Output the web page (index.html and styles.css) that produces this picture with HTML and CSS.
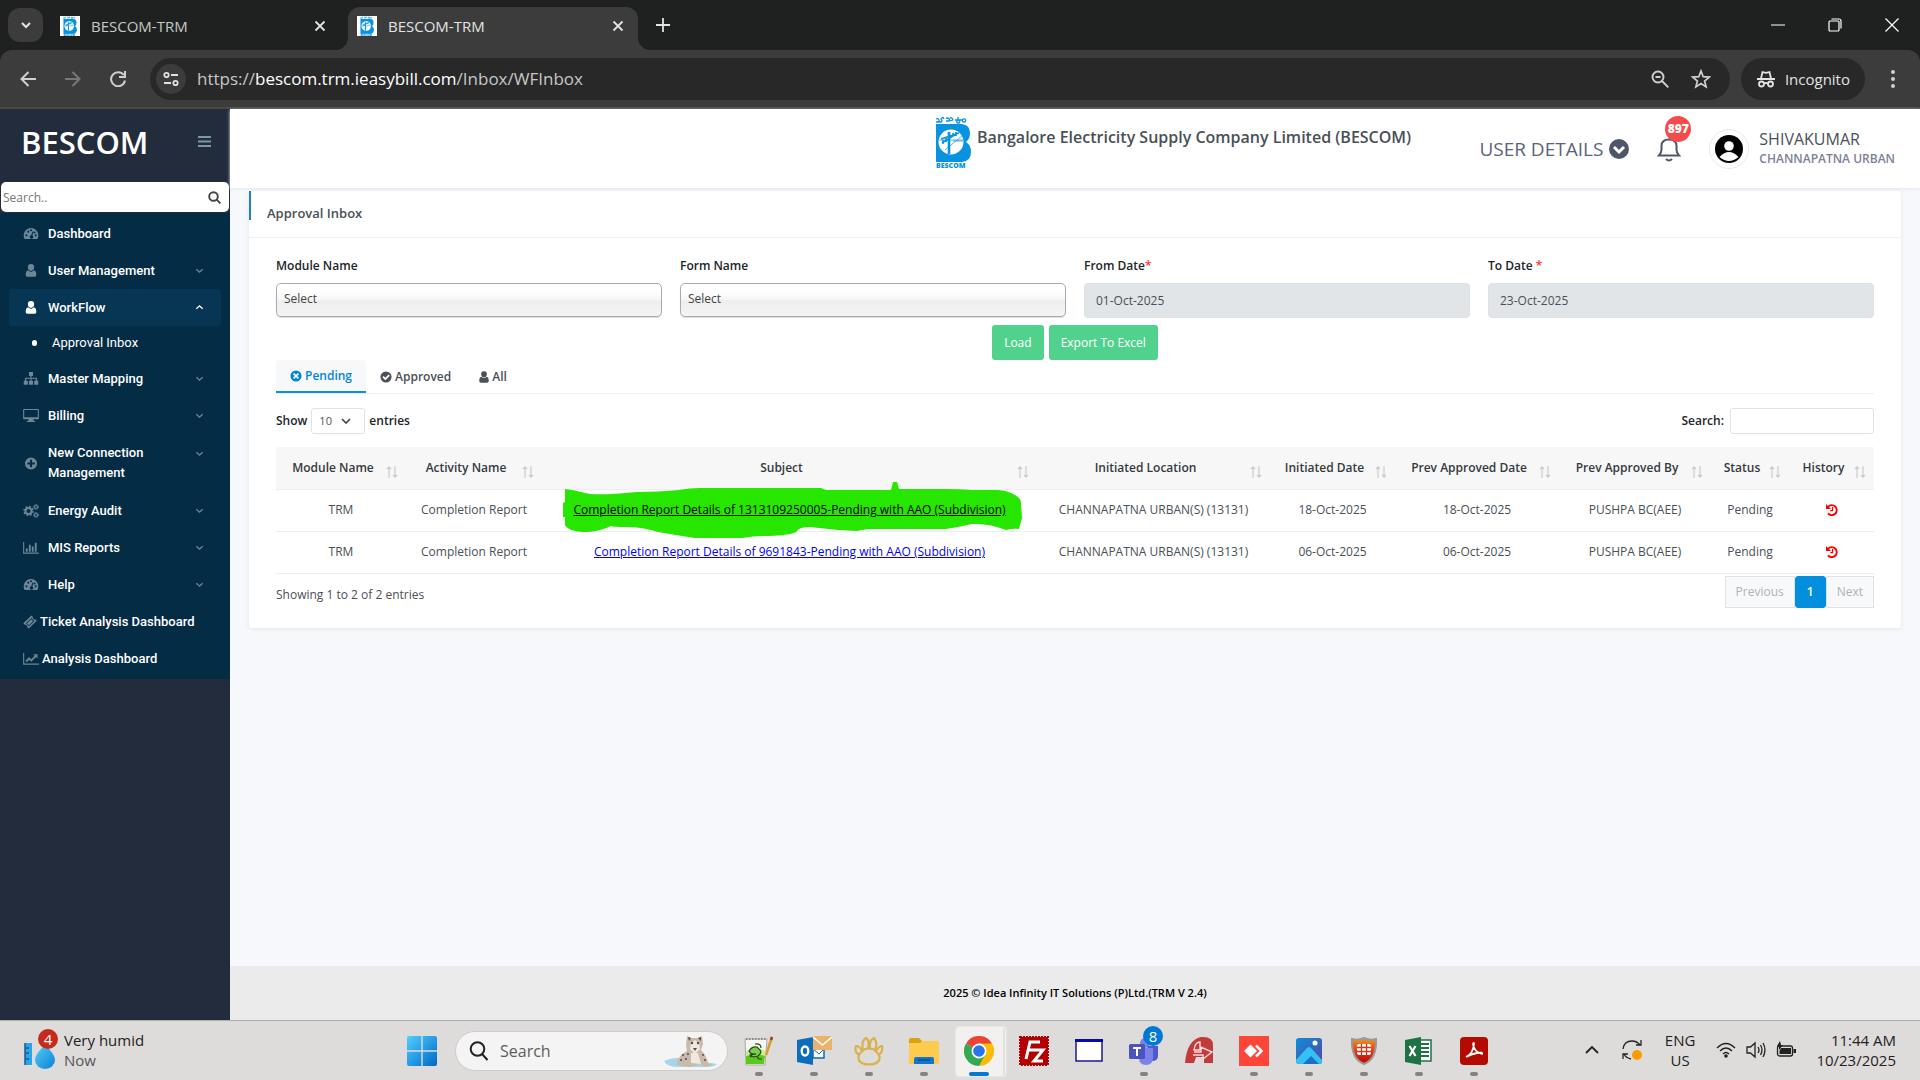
FILE: index.html
```html
<!DOCTYPE html>
<html lang="en">
<head>
<meta charset="utf-8">
<meta name="viewport" content="width=device-width, initial-scale=1">
<title>BESCOM-TRM</title>
<link rel="stylesheet" href="styles.css">
</head>
<body>
<svg class="defs" aria-hidden="true">
  <symbol id="logo" viewBox="0 0 36 52">
    <g fill="none" stroke="#0793e0" stroke-width="1.3"><path d="M1 3q2-1 3 1t-3 2h5q2-1 0-3 2-3 3 0"/><path d="M11 2q5 0 3 3h-3q5 0 7-1-1-3-3-2"/><path d="M20 4h7M23 1v3q-3 3 1 3 2-2-1-3"/><circle cx="29" cy="4.500" r="1.700"/></g>
    <path fill="#0793e0" d="M1 8h26q8 1 8 9 0 6-4 9 5 3 5 10 0 9-9 10H1z"/>
    <circle cx="16" cy="26" r="12.500" fill="#fff"/>
    <g stroke="#0793e0" fill="none"><path stroke-width="2.600" d="M14 16v22"/><path stroke-width="1.600" d="M7 27l14-9M6 23l18-6M8 24v4M11 22v4M18 17v4M21 16v4"/><path stroke-width=".7" d="M4 24h24M10 34l17-14M18 25h10"/></g>
    <text x="1" y="52" font-family="Open Sans, sans-serif" font-size="7" font-weight="800" fill="#0793e0">BESCOM</text>
  </symbol>
  <symbol id="gauge" viewBox="0 0 16 14"><path fill="currentColor" fill-rule="evenodd" d="M8 1a8 8 0 0 0-6.800 12h13.600A8 8 0 0 0 8 1zM2 9a1.100 1.100 0 1 1 2.200 0A1.100 1.100 0 0 1 2 9zm2-4a1.100 1.100 0 1 1 2.200 0A1.100 1.100 0 0 1 4 5zm2.900-1.500a1.100 1.100 0 1 1 2.200 0 1.100 1.100 0 0 1-2.200 0zM10.500 5l-1 4.200a1.800 1.800 0 1 1-1.200-.3L9.500 4.800zM10.700 6a1.100 1.100 0 1 1 2.200 0 1.100 1.100 0 0 1-2.200 0zM12 9a1.100 1.100 0 1 1 2.200 0A1.100 1.100 0 0 1 12 9z"/></symbol>
  <symbol id="user" viewBox="0 0 12 14"><path fill="currentColor" d="M6 0a3.400 3.400 0 0 1 3.400 3.600C9.400 5.700 8 7.500 6 7.500S2.600 5.700 2.600 3.600A3.400 3.400 0 0 1 6 0zM3 6.700c.8 1 1.800 1.600 3 1.600s2.200-.6 3-1.600c2 .3 2.700 2.500 2.700 4.800 0 1.500-.8 2.300-2 2.300H2.300c-1.200 0-2-.8-2-2.300C.3 9.200 1 7 3 6.700z"/></symbol>
  <symbol id="sitemap" viewBox="0 0 16 14"><path fill="currentColor" d="M5.800 0h4.400v4.200H8.600v1.900h5.900v3.300h1.300v4.300h-4.400V9.400h1.700V7.300H8.600v2.100h1.600v4.300H5.800V9.400h1.600V7.300H2.900v2.100h1.700v4.300H.2V9.400h1.300V6.100h5.900V4.200H5.800z"/></symbol>
  <symbol id="screen" viewBox="0 0 17 14"><path fill="currentColor" fill-rule="evenodd" d="M1 0h15q1 0 1 1v9q0 1-1 1h-5l.5 2H13v1H4v-1h1.500L6 11H1q-1 0-1-1V1q0-1 1-1zm.2 1.200v7.600h14.600V1.200z"/></symbol>
  <symbol id="plusc" viewBox="0 0 14 14"><path fill="currentColor" fill-rule="evenodd" d="M7 .5a6.500 6.500 0 1 1 0 13 6.500 6.500 0 0 1 0-13zM5.900 3v2.900H3v2.200h2.900V11h2.200V8.100H11V5.900H8.100V3z"/></symbol>
  <symbol id="cogs" viewBox="0 0 16 14"><g fill="none" stroke="currentColor"><circle cx="5.500" cy="7" r="3" stroke-width="2"/><circle cx="5.500" cy="7" r="4.500" stroke-width="1.500" stroke-dasharray="1.800 1.730"/><circle cx="13" cy="3" r="1.500" stroke-width="1.200"/><circle cx="13" cy="3" r="2.500" stroke-width="1" stroke-dasharray="1.100 .86"/><circle cx="13" cy="11" r="1.500" stroke-width="1.200"/><circle cx="13" cy="11" r="2.500" stroke-width="1" stroke-dasharray="1.100 .86"/></g></symbol>
  <symbol id="bars" viewBox="0 0 17 14"><path fill="currentColor" d="M0 1h1.200v11.500H17v1.200H0zM3 8h2v3.500H3zM6.200 4h2v7.500h-2zM9.400 6h2v5.500h-2zM12.600 2h2v9.500h-2z"/></symbol>
  <symbol id="ticket" viewBox="0 0 14 14"><path fill="currentColor" fill-rule="evenodd" d="M8.500.5l1.400 1.400q-.2 1.300.6 2 .8.700 2 .5L13.800 5.800 5.700 13.600 4.300 12.200q.2-1.300-.6-2-.8-.7-2-.5L.3 8.300zM8.300 3L2.900 8.300 6 11.300 11.400 6zM8.200 4.200l2 1.900-4.200 4.100-2-1.900z"/></symbol>
  <symbol id="trend" viewBox="0 0 17 14"><path fill="currentColor" d="M0 1h1.200v11.500H17v1.200H0zM2.500 9.500l4-4 2.300 2.200L12.500 4 11 2.500h4.500V7L14 5.500 8.800 10.600 6.500 8.400l-2.500 2.600z"/></symbol>
  <symbol id="down" viewBox="0 0 10 10"><path fill="none" stroke="currentColor" stroke-width="1.500" d="M1.500 3.500L5 6.800l3.500-3.300"/></symbol>
  <symbol id="xc" viewBox="0 0 14 14"><path fill="currentColor" fill-rule="evenodd" d="M7 .5a6.500 6.500 0 1 1 0 13 6.500 6.500 0 0 1 0-13zM4.900 3.500L3.500 4.900 5.600 7 3.500 9.100l1.400 1.400L7 8.400l2.100 2.100 1.400-1.400L8.400 7l2.100-2.100-1.400-1.400L7 5.600z"/></symbol>
  <symbol id="okc" viewBox="0 0 14 14"><path fill="currentColor" fill-rule="evenodd" d="M7 .5a6.500 6.500 0 1 1 0 13 6.500 6.500 0 0 1 0-13zM10 4L6.200 7.800 4.300 5.900 2.800 7.400l3.400 3.400 5.300-5.300z"/></symbol>
  <symbol id="sort" viewBox="0 0 12 12"><path fill="none" stroke="#c9cbce" stroke-width="1.200" d="M3 12V1M1 3.200L3 .8l2 2.400M9 0v11M7 8.800l2 2.400 2-2.400"/></symbol>
  <symbol id="history" viewBox="0 0 12 12"><path fill="none" stroke="red" stroke-width="1.900" d="M2 2.800A5 5 0 1 1 2 9.500"/><path fill="red" d="M0 0v5h5z"/><path fill="none" stroke="red" stroke-width="1.200" d="M6.600 3v3.600H4.300"/></symbol>
  <symbol id="close" viewBox="0 0 12 12"><path fill="none" stroke="currentColor" stroke-width="1.800" d="M1.500 1.500l9 9M10.500 1.500l-9 9"/></symbol>
</svg>

<header class="browser">
  <div class="tabstrip">
    <button class="tabsearch" aria-label="Search tabs"><svg width="14" height="14" viewBox="0 0 14 14"><path d="M3 5l4 4 4-4" fill="none" stroke="#e3e3e3" stroke-width="2"/></svg></button>
    <div class="tab"><span class="favicon"><svg width="20" height="20"><use href="#logo"/></svg></span><span class="tabname">BESCOM-TRM</span><button class="plain" aria-label="Close tab"><svg width="12" height="12"><use href="#close"/></svg></button></div>
    <div class="tab active"><span class="favicon"><svg width="20" height="20"><use href="#logo"/></svg></span><span class="tabname">BESCOM-TRM</span><button class="plain" aria-label="Close tab"><svg width="12" height="12"><use href="#close"/></svg></button></div>
    <button class="plain newtab" aria-label="New tab"><svg width="14" height="14" viewBox="0 0 14 14"><path d="M7 0v14M0 7h14" stroke="#e3e3e3" stroke-width="1.800"/></svg></button>
    <div class="winbtns">
      <button class="plain" aria-label="Minimize"><svg width="14" height="14" viewBox="0 0 14 14"><path d="M0 7h14" stroke="#fff"/></svg></button>
      <button class="plain" aria-label="Restore"><svg width="14" height="14" viewBox="0 0 14 14"><g fill="none" stroke="#fff" stroke-width="1.200"><rect x="1" y="3" width="10" height="10" rx="1"/><path d="M3.500 1H11q2 0 2 2v7.500"/></g></svg></button>
      <button class="plain" aria-label="Close"><svg width="14" height="14" viewBox="0 0 14 14"><path d="M.5.5l13 13M13.500.5l-13 13" stroke="#fff" stroke-width="1.200"/></svg></button>
    </div>
  </div>
  <div class="toolbar">
    <nav class="navbtns">
      <button class="plain" aria-label="Back"><svg width="16" height="16" viewBox="0 0 16 16"><path d="M16 8H2M8.500 1L1.500 8l7 7" fill="none" stroke="#d0d0d0" stroke-width="2"/></svg></button>
      <button class="plain" aria-label="Forward"><svg width="16" height="16" viewBox="0 0 16 16"><path d="M0 8h14M7.500 1l7 7-7 7" fill="none" stroke="#777" stroke-width="2"/></svg></button>
      <button class="plain" aria-label="Reload"><svg width="16" height="16" viewBox="0 0 16 16"><path d="M13.700 4A7 7 0 1 0 15 9.500M15 0v6H9" fill="none" stroke="#d0d0d0" stroke-width="2"/></svg></button>
    </nav>
    <div class="omnibox">
      <button class="siteinfo" aria-label="Site information"><svg width="16" height="16" viewBox="0 0 16 16"><g fill="none" stroke="#e0e0e0" stroke-width="1.800"><circle cx="3.500" cy="4" r="2.200"/><path d="M8 4h7M1 12h7"/><circle cx="12.500" cy="12" r="2.200"/></g></svg></button>
      <span class="url">https://<b>bescom.trm.ieasybill.com</b>/Inbox/WFInbox</span>
      <button class="plain" aria-label="Zoom"><svg width="18" height="18" viewBox="0 0 18 18"><g fill="none" stroke="#d0d0d0" stroke-width="1.900"><circle cx="7" cy="7" r="5.500"/><path d="M11 11l6.300 6.300M4.500 7h5"/></g></svg></button>
      <button class="plain" aria-label="Bookmark"><svg width="20" height="20" viewBox="0 0 20 20"><path d="M10 2l2.200 5.700 6.100.4-4.700 3.900 1.500 5.900L10 14.600l-5.100 3.300L6.400 12 1.700 8.100l6.100-.4z" fill="none" stroke="#d0d0d0" stroke-width="1.700"/></svg></button>
    </div>
    <button class="incognito"><svg width="18" height="18" viewBox="0 0 18 18"><g fill="none" stroke="#e3e3e3" stroke-width="1.800"><path d="M0 9h18M4 8.500L5.500 2l3.500.8 3.500-.8L14 8.500"/><circle cx="4.500" cy="14" r="2.500"/><circle cx="13.500" cy="14" r="2.500"/><path d="M7 13.500q2-1 4 0"/></g></svg>Incognito</button>
    <button class="plain" aria-label="Menu"><svg width="18" height="18" viewBox="0 0 18 18"><g fill="#d0d0d0"><circle cx="9" cy="2" r="2"/><circle cx="9" cy="9" r="2"/><circle cx="9" cy="16" r="2"/></g></svg></button>
  </div>
</header>

<div class="app">
  <aside class="sidebar">
    <div class="brand"><span>BESCOM</span><button class="plain" aria-label="Toggle menu"><svg width="13" height="11" viewBox="0 0 13 11"><path d="M0 1h13M0 5.500h13M0 10h13" stroke="#7b98a8" stroke-width="1.800"/></svg></button></div>
    <label class="menusearch"><input type="text" placeholder="Search.." aria-label="Search menu"><svg width="13" height="13" viewBox="0 0 13 13"><g fill="none" stroke="#444" stroke-width="1.900"><circle cx="5.500" cy="5.500" r="4.300"/><path d="M8.700 8.700l3.700 3.700"/></g></svg></label>
    <ul class="menu">
      <li><a href="#"><svg class="mi" width="15" height="13"><use href="#gauge"/></svg><span>Dashboard</span></a></li>
      <li><a href="#"><svg class="mi" width="11" height="13"><use href="#user"/></svg><span>User Management</span><svg class="chev" width="9" height="9"><use href="#down"/></svg></a></li>
      <li><a href="#" class="open"><svg class="mi" width="11" height="13"><use href="#user"/></svg><span>WorkFlow</span><svg class="chev up" width="9" height="9"><use href="#down"/></svg></a>
        <a href="#" class="sub">Approval Inbox</a></li>
      <li><a href="#"><svg class="mi" width="15" height="13"><use href="#sitemap"/></svg><span>Master Mapping</span><svg class="chev" width="9" height="9"><use href="#down"/></svg></a></li>
      <li><a href="#"><svg class="mi" width="16" height="13"><use href="#screen"/></svg><span>Billing</span><svg class="chev" width="9" height="9"><use href="#down"/></svg></a></li>
      <li><a href="#" class="tall"><svg class="mi" width="13" height="13"><use href="#plusc"/></svg><span>New Connection Management</span><svg class="chev first" width="9" height="9"><use href="#down"/></svg></a></li>
      <li><a href="#"><svg class="mi" width="16" height="14"><use href="#cogs"/></svg><span>Energy Audit</span><svg class="chev" width="9" height="9"><use href="#down"/></svg></a></li>
      <li><a href="#"><svg class="mi" width="16" height="13"><use href="#bars"/></svg><span>MIS Reports</span><svg class="chev" width="9" height="9"><use href="#down"/></svg></a></li>
      <li><a href="#"><svg class="mi" width="15" height="13"><use href="#gauge"/></svg><span>Help</span><svg class="chev" width="9" height="9"><use href="#down"/></svg></a></li>
      <li><a href="#" class="tight"><svg width="14" height="14"><use href="#ticket"/></svg><span>Ticket Analysis Dashboard</span></a></li>
      <li><a href="#" class="tight"><svg width="16" height="13"><use href="#trend"/></svg><span>Analysis Dashboard</span></a></li>
    </ul>
  </aside>

  <div class="page">
    <header class="topbar">
      <div class="company"><svg width="36" height="52"><use href="#logo"/></svg><h1>Bangalore Electricity Supply Company Limited (BESCOM)</h1></div>
      <button class="details">USER DETAILS<svg width="20" height="20" viewBox="0 0 20 20"><circle cx="10" cy="10" r="10" fill="#50566a"/><path d="M5 8l5 5 5-5" fill="none" stroke="#fff" stroke-width="3"/></svg></button>
      <button class="bell" aria-label="Notifications"><svg width="24" height="26" viewBox="0 0 24 26"><path d="M2 19.500h20q-2.500-2.500-2.500-6V10q0-6.500-7.500-6.500T4.500 10v3.500q0 3.500-2.500 6z" fill="none" stroke="#50566a" stroke-width="2"/><path d="M9 23q3 3 6 0" fill="none" stroke="#50566a" stroke-width="2"/></svg><span class="count">897</span></button>
      <div class="profile">
        <span class="avatar"><svg width="28" height="28" viewBox="0 0 28 28"><circle cx="14" cy="14" r="14" fill="#000"/><circle cx="14" cy="11" r="4.800" fill="#fff"/><path d="M4.500 22q9.500-10 19 0-9.500 8-19 0z" fill="#fff"/></svg></span>
        <span class="who"><b>SHIVAKUMAR</b><small>CHANNAPATNA URBAN</small></span>
      </div>
    </header>

    <main class="content">
      <section class="card">
        <h2>Approval Inbox</h2>
        <form class="body">
          <div class="filters">
            <div class="field"><label for="module">Module Name</label><select id="module" class="pick"><option>Select</option></select></div>
            <div class="field"><label for="form">Form Name</label><select id="form" class="pick"><option>Select</option></select></div>
            <div class="field"><label for="from">From Date<i>*</i></label><input id="from" class="date" type="text" value="01-Oct-2025" readonly></div>
            <div class="field"><label for="to">To Date <i>*</i></label><input id="to" class="date" type="text" value="23-Oct-2025" readonly></div>
          </div>
          <div class="actions"><button type="button">Load</button><button type="button">Export To Excel</button></div>
          <nav class="tabs">
            <a href="#" class="on"><svg width="12" height="12"><use href="#xc"/></svg>Pending</a>
            <a href="#"><svg width="12" height="12"><use href="#okc"/></svg>Approved</a>
            <a href="#"><svg width="10" height="12"><use href="#user"/></svg>All</a>
          </nav>
          <div class="controls">
            <label>Show <span class="len"><select><option>10</option></select><svg width="12" height="12" viewBox="0 0 12 12"><path d="M2 4l4 4 4-4" fill="none" stroke="#444" stroke-width="1.700"/></svg></span> entries</label>
            <label>Search: <input type="search"></label>
          </div>
          <table>
            <colgroup><col class="c-module"><col class="c-activity"><col><col class="c-loc"><col class="c-date"><col class="c-prev"><col class="c-by"><col class="c-status"><col class="c-hist"></colgroup>
            <thead><tr>
              <th>Module Name<svg class="sort"><use href="#sort"/></svg></th><th>Activity Name<svg class="sort"><use href="#sort"/></svg></th><th>Subject<svg class="sort"><use href="#sort"/></svg></th><th>Initiated Location<svg class="sort"><use href="#sort"/></svg></th><th>Initiated Date<svg class="sort"><use href="#sort"/></svg></th><th>Prev Approved Date<svg class="sort"><use href="#sort"/></svg></th><th>Prev Approved By<svg class="sort"><use href="#sort"/></svg></th><th>Status<svg class="sort"><use href="#sort"/></svg></th><th>History<svg class="sort"><use href="#sort"/></svg></th>
            </tr></thead>
            <tbody>
              <tr class="marked"><td>TRM</td><td>Completion Report</td><td><svg class="marker" width="470" height="60" viewBox="0 0 470 60"><path fill="#27e600" d="M10 9Q20 10 30 13T82 12Q104 12 124 10 134 8 145 8H266L271 10H336L338 2H342L344 9H391Q404 9 417 10H443Q450 10 456 13 466 17 466 23L467 38 464 49Q458 48 451 50 434 43 417 44 404 47 391 49H313L302 51Q278 50 255 47 244 47 242 51T213 56Q200 56 187 58H140Q120 55 103 52 87 47 72 47T56 46Q46 51 33 52 24 52 20 51 12 49 10 45V37H8V23L10 22z"/></svg><a href="#">Completion Report Details of 1313109250005-Pending with AAO (Subdivision)</a></td><td>CHANNAPATNA URBAN(S) (13131)</td><td>18-Oct-2025</td><td>18-Oct-2025</td><td>PUSHPA BC(AEE)</td><td>Pending</td><td><svg width="12" height="12"><use href="#history"/></svg></td></tr>
              <tr><td>TRM</td><td>Completion Report</td><td><a href="#">Completion Report Details of 9691843-Pending with AAO (Subdivision)</a></td><td>CHANNAPATNA URBAN(S) (13131)</td><td>06-Oct-2025</td><td>06-Oct-2025</td><td>PUSHPA BC(AEE)</td><td>Pending</td><td><svg width="12" height="12"><use href="#history"/></svg></td></tr>
            </tbody>
          </table>
          <div class="tablefoot">
            <p>Showing 1 to 2 of 2 entries</p>
            <div class="pager"><button type="button" disabled>Previous</button><button type="button" class="current">1</button><button type="button" disabled>Next</button></div>
          </div>
        </form>
      </section>
    </main>
    <footer class="foot">2025 © Idea Infinity IT Solutions (P)Ltd.(TRM V 2.4)</footer>
  </div>
</div>

<footer class="taskbar">
  <div class="weather">
    <span class="wicon"><svg width="34" height="38" viewBox="0 0 34 38"><defs><linearGradient id="w" x2="1" y2="1"><stop stop-color="#4fd0f8"/><stop offset="1" stop-color="#0f7fd6"/></linearGradient></defs><path fill="#2aa5e8" d="M1 12h7v22H1z"/><path d="M1 12v22M2 17h3M2 22h3M2 28h3" stroke="#155a90" stroke-width="1.500"/><path fill="url(#w)" d="M21 14q10 9 10 15a10 9 0 0 1-20 0q0-6 10-15z"/></svg><span class="wcount">4</span></span>
    <span class="wtext"><span>Very humid</span><small>Now</small></span>
  </div>
  <div class="dock">
    <button class="plain app-icon start" aria-label="Start"><svg width="30" height="30" viewBox="0 0 30 30"><defs><linearGradient id="s" x2="1" y2="1"><stop stop-color="#4fd0ff"/><stop offset="1" stop-color="#0067c8"/></linearGradient></defs><path fill="url(#s)" d="M2 0h12.300v14.300H0V2q0-2 2-2zM15.700 0H28q2 0 2 2v12.300H15.700zM0 15.700h14.300V30H2q-2 0-2-2zM15.700 15.700H30V28q0 2-2 2H15.700z"/></svg></button>
    <label class="winsearch"><svg width="20" height="20" viewBox="0 0 20 20"><g fill="none" stroke="#222" stroke-width="2"><circle cx="8.500" cy="8" r="6.800"/><path d="M13 13l5.500 6"/></g></svg><input type="text" placeholder="Search" aria-label="Windows search">
      <svg width="56" height="32" viewBox="0 0 56 32"><path fill="#a8d4e8" d="M1 26q10-5 22-2l31 5q-2 3-12 3H16Q4 32 1 26z"/><path fill="#c9b9ab" d="M24 1l4 2h7l4-2 1 8-2 6q6 6 7 13l5 2-8 2-5-3-10 3-13-2q0-9 10-14l-1-6z"/><path fill="#efe8e1" d="M28 8l4-3 4 3 1 6-5 5-5-5zM28 18h7l3 11-10-1z"/><g fill="#5a4c44"><circle cx="29" cy="8" r="1.200"/><circle cx="35" cy="8" r="1.200"/><path d="M30 13h4l-2 3zM25 2l3 1-2 3zM38 2l-3 1 3 3z"/><circle cx="20" cy="20" r="1"/><circle cx="23" cy="24" r="1"/><circle cx="40" cy="20" r="1"/><circle cx="42" cy="25" r="1"/><circle cx="18" cy="25" r="1"/><circle cx="25" cy="19" r="1"/></g></svg></label>
    <button class="plain app-icon run" aria-label="Notepad++"><svg width="30" height="30" viewBox="0 0 30 30"><path fill="#f6f6f0" stroke="#aaa" d="M1 3h22l-2 26H2z"/><path d="M2 3h20" stroke="#888" stroke-width="2" stroke-dasharray="1.500 1.500"/><path fill="#c6ee9a" d="M2 15q10-4 20 0l-1 6H2z"/><path fill="#5cc81c" d="M2 20q10-3 19 0l-1 8H2z"/><path fill="#7bd04a" stroke="#254a18" stroke-width="1.200" d="M5 15q3-5 8-4l2 2q3 2 1 5l-2 2q-6 2-8-1l6-1q-5 1-7-3z"/><path d="M11 8q6-1 6 4M6 21l2-2M13 21l2 2h3" fill="none" stroke="#254a18" stroke-width="1.200"/><path d="M28 1l-6 18" stroke="#d99a35" stroke-width="2.500"/><path d="M28 1l-1 3" stroke="#a33" stroke-width="2.500"/></svg></button>
    <button class="plain app-icon run" aria-label="Outlook"><svg width="36" height="30" viewBox="0 0 36 30"><path fill="#fff" stroke="#0a6cbc" stroke-width="1.500" d="M17 12h11v10H17z"/><path d="M17 13l6 5 5-5" fill="none" stroke="#0a6cbc"/><path fill="#0c6dbd" d="M1 4l16-3v28L1 26z"/><ellipse cx="9" cy="15" rx="3.300" ry="4.500" fill="none" stroke="#fff" stroke-width="2.400"/><path fill="#eab26c" d="M17 0h19v14H17z"/><path d="M17 1l9.500 8L36 1" fill="none" stroke="#fff" stroke-width="1.500"/></svg></button>
    <button class="plain app-icon run" aria-label="Navicat"><svg width="30" height="30" viewBox="0 0 30 30"><g fill="none" stroke="#d9b24d" stroke-width="2.200"><path d="M15 12.500q5 0 7 3 5 4 3 9-3 4-10 4t-10-4q-2-5 3-9 2-3 7-3z"/><path d="M9 14Q7 5 12 2q4 3 2 10M16 12q-1-8 4-10 4 5 1 12M6 19Q0 17 2 10q4 0 6 5M24 19q5-2 4-9-3 0-6 5"/></g></svg></button>
    <button class="plain app-icon run" aria-label="File Explorer"><svg width="30" height="30" viewBox="0 0 30 30"><path fill="#dda20f" d="M2 2h8l3 3v6H0V4q0-2 2-2z"/><path fill="#fdcb4d" d="M14 5h14q2 0 2 2v21H0V7h11z"/><path fill="#1276cc" d="M7 21h16q2 0 2 2v5H5v-5q0-2 2-2z"/><path d="M9 24h12" stroke="#0a4f90" stroke-width="1.500"/></svg></button>
    <button class="plain app-icon run focus" aria-label="Chrome"><svg width="30" height="30" viewBox="0 0 30 30"><path fill="#ea4335" d="M15 15L2 7.500A15 15 0 0 1 28 7.500z"/><path fill="#fbbc05" d="M15 15V7.500h13A15 15 0 0 1 15 30z"/><path fill="#34a853" d="M15 15l6 4-6 11A15 15 0 0 1 2 7.500z"/><circle cx="15" cy="15" r="7.500" fill="#fff"/><circle cx="15" cy="15" r="5.800" fill="#2b74ea"/></svg></button>
    <button class="plain app-icon" aria-label="FileZilla"><svg width="30" height="30" viewBox="0 0 30 30"><path fill="#b30000" stroke="#b30000" stroke-width="2" stroke-dasharray="2 1" d="M1 1h28v28H1z"/><path d="M7 23L11 6h10M9 14h8M16 14h8l-9 11h9" fill="none" stroke="#fff" stroke-width="3"/></svg></button>
    <button class="plain app-icon" aria-label="Window"><svg width="30" height="30" viewBox="0 0 30 30"><path fill="#fff" stroke="#1b1b87" stroke-width="1.500" d="M2 4h26v21H2z"/><path fill="#0808b0" d="M1 3h28v3H1z"/></svg></button>
    <button class="plain app-icon run" aria-label="Teams"><svg width="30" height="30" viewBox="0 0 30 30"><circle cx="16" cy="7" r="5" fill="#7b83eb"/><path fill="#5059c9" d="M18 10h11v10q0 5-6 5z"/><path fill="#7b83eb" d="M10 12h14v10q0 7-7 7t-7-7z"/><rect y="8" width="16" height="15" rx="1.500" fill="#4b53bc"/><path d="M4 12h8M8 12v8" stroke="#fff" stroke-width="2"/></svg><span class="tcount">8</span></button>
    <button class="plain app-icon" aria-label="Report tool"><svg width="30" height="30" viewBox="0 0 30 30"><path fill="#c23a3a" d="M1 27Q3 4 17 1q12-1 12 8v18h-9v-6h-8l-2 6z"/><path d="M10 14q1-8 6-8v8zM10 16h7v-5l11 5-9 7v-4h-10M13 26v-5" fill="none" stroke="#f7dada" stroke-width="1.400"/></svg></button>
    <button class="plain app-icon run" aria-label="AnyDesk"><svg width="30" height="30" viewBox="0 0 30 30"><path fill="#ff4438" d="M0 0h30v30H0z"/><path fill="#fff" d="M5 15l6.500-6.500L18 15l-6.500 6.500z"/><path d="M17 9.500l5.500 5.500-5.500 5.500" stroke="#fff" stroke-width="2.500" fill="none"/></svg></button>
    <button class="plain app-icon run" aria-label="Photos"><svg width="30" height="30" viewBox="0 0 30 30"><defs><linearGradient id="p" x2="1" y2="1"><stop stop-color="#108cdc"/><stop offset="1" stop-color="#5446a4"/></linearGradient></defs><rect x="2" y="2" width="26" height="26" rx="3" fill="url(#p)"/><path fill="#35c1f1" d="M2 24l11-12q2-2 4 0l11 12v1q0 3-3 3H5q-3 0-3-3z"/><path fill="#1673c8" d="M9 28l8-8 8 8z"/><circle cx="21" cy="7" r="2.500" fill="#fff"/></svg></button>
    <button class="plain app-icon run" aria-label="FortiClient"><svg width="30" height="30" viewBox="0 0 30 30"><defs><linearGradient id="f" x2="0" y2="1"><stop stop-color="#f39a1d"/><stop offset=".6" stop-color="#dd2a10"/><stop offset="1" stop-color="#b50808"/></linearGradient></defs><path fill="url(#f)" stroke="#999" stroke-width="2" d="M3 3q6 2 12-1 6 3 12 1 1 20-12 25Q2 23 3 3z"/><rect x="8" y="8" width="14" height="11" rx="2" fill="#fff"/><path d="M8 11.500h14M8 15.500h14M12.500 8v11M17.500 8v11" stroke="#d9331a" stroke-width="1.300"/></svg></button>
    <button class="plain app-icon run" aria-label="Excel"><svg width="30" height="30" viewBox="0 0 30 30"><path fill="#fff" stroke="#1f7244" stroke-width="1.500" d="M14 4h13v21H14z"/><path d="M16 8h9M16 12h9M16 16h9M16 20h9" stroke="#1f7244" stroke-width="2"/><path fill="#1f7244" d="M1 4l16-3v28L1 26z"/><path d="M5.500 10l6 10M11.500 10l-6 10" stroke="#fff" stroke-width="2.200"/></svg></button>
    <button class="plain app-icon run" aria-label="Acrobat"><svg width="30" height="30" viewBox="0 0 30 30"><rect x="1" y="1" width="28" height="28" rx="4" fill="#b30b00"/><path d="M7 21q7-3 8-13 0-2-1 0 1 8 9 10 1-2-5-1-6 1-11 4z" fill="none" stroke="#fff" stroke-width="1.800"/></svg></button>
  </div>
  <div class="tray">
    <button class="plain" aria-label="Hidden icons"><svg width="14" height="10" viewBox="0 0 14 10"><path d="M1 8l6-6 6 6" fill="none" stroke="#222" stroke-width="1.800"/></svg></button>
    <svg class="sync" width="22" height="22" viewBox="0 0 22 22"><path d="M2 10q1-8 9-8 5 0 8 4M20 1v5h-5M2 20v-5h5M3 15q2 4 7 5" fill="none" stroke="#222" stroke-width="1.300"/><circle cx="16" cy="16" r="5" fill="#f90"/></svg>
    <span class="lang">ENG<br>US</span>
    <svg width="20" height="16" viewBox="0 0 20 16"><g fill="none" stroke="#222" stroke-width="1.500"><path d="M1 6q9-9 18 0M4 9q6-6 12 0M7 12q3-3 6 0"/></g><circle cx="10" cy="14" r="1.800" fill="#222"/></svg>
    <svg width="20" height="18" viewBox="0 0 20 18"><path d="M1 6h3.500L9 2v14l-4.500-4H1zM12 6q2 3 0 6M14.500 4q3 5 0 10M17 2q4 7 0 14" fill="none" stroke="#222" stroke-width="1.300"/></svg>
    <svg width="20" height="18" viewBox="0 0 20 18"><rect x="1.500" y="5" width="15" height="10" rx="2" fill="none" stroke="#222" stroke-width="1.300"/><path fill="#222" d="M5 7h10v6H3.500V10zM17.500 8H20v4h-2.500zM4 0L1 5h2v4l4-5H5z"/></svg>
    <time class="clock">11:44 AM<br>10/23/2025</time>
  </div>
</footer>
</body>
</html>
```
FILE: styles.css
```css
* { box-sizing: border-box; }
body { margin: 0; min-height: 100vh; display: flex; flex-direction: column; font: 12px/18px "Open Sans", "Noto Sans", sans-serif; color: #495057; background: #f6f8fb; }
button, input, select { font: inherit; color: inherit; margin: 0; }
button { cursor: pointer; }
a { text-decoration: none; color: inherit; }
svg { flex: none; display: block; }
.defs { display: none; }
.plain { display: flex; align-items: center; justify-content: center; background: none; border: 0; padding: 0; color: #e3e3e3; }

/* browser frame */
.browser { background: #1f2120; color: #e3e3e3; }
.tabstrip { display: flex; align-items: center; height: 50px; padding-left: 8px; }
.tabsearch { display: flex; align-items: center; justify-content: center; width: 35px; height: 34px; border: 0; border-radius: 12px; background: #3c3c3c; }
.tab { position: relative; display: flex; align-items: center; gap: 11px; width: 290px; height: 43px; padding: 0 14px 6px 9px; margin-top: 7px; border-radius: 12px 12px 0 0; font-size: 15px; color: #c7c7c7; }
.tab:nth-child(2) { margin-left: 8px; width: 297px; padding-right: 22px; }
.tab.active { background: #3c3c3c; color: #e3e3e3; }
.tab.active::before, .tab.active::after { content: ""; position: absolute; bottom: 0; width: 12px; height: 12px; }
.tab.active::before { left: -12px; background: radial-gradient(circle at 0 0, transparent 12px, #3c3c3c 12px); }
.tab.active::after { right: -12px; background: radial-gradient(circle at 100% 0, transparent 12px, #3c3c3c 12px); }
.tabname { flex: 1; }
.favicon { width: 20px; height: 20px; background: #fff; }
.newtab { width: 50px; }
.winbtns { margin-left: auto; display: flex; }
.winbtns .plain { width: 57px; height: 46px; }
.toolbar { display: flex; align-items: center; height: 59px; padding-right: 18px; background: #3c3c3c; border-radius: 12px 12px 0 0; border-bottom: 2px solid #484a46; }
.navbtns { display: flex; gap: 29px; padding: 0 24px 0 20px; }
.omnibox { flex: 1; display: flex; align-items: center; gap: 22px; height: 42px; padding: 0 19px 0 6px; border-radius: 21px; background: #282828; }
.siteinfo { display: flex; align-items: center; justify-content: center; width: 30px; height: 30px; padding: 0; border: 0; border-radius: 15px; background: #3c3c3c; }
.url { flex: 1; margin-left: -11px; font-size: 17px; line-height: 24px; color: #c7c7c7; }
.url b { font-weight: 400; color: #fff; }
.incognito { display: flex; align-items: center; gap: 10px; height: 42px; margin: 0 19px 0 11px; padding: 0 15px 0 16px; border: 0; border-radius: 21px; background: #282828; color: #e3e3e3; font-size: 15px; }

/* application */
.app { flex: 1; display: flex; }
.sidebar { width: 230px; background: #232c3d; color: #fff; }
.brand { display: flex; align-items: center; justify-content: space-between; height: 73px; padding: 0 19px 8px 21px; font-size: 31px; font-weight: 600; }
.menusearch { display: flex; align-items: center; height: 30px; margin: 0 1px 1px; padding: 0 8px 0 2px; background: #fff; border-radius: 5px; }
.menusearch input { flex: 1; min-width: 0; border: 0; padding: 1px 0 0; outline: 0; background: none; color: #444; }
.menu { margin: 0; padding: 2px 9px 2px; list-style: none; background: #042c45; font: 500 13px/21px Roboto, sans-serif; }
.menu a { display: flex; align-items: center; padding: 8px 17px 8px 14px; border-radius: 3px; }
.menu a > svg { color: #6d8797; }
.menu a span { flex: 1; }
.menu .mi { width: 16px; margin-right: 9px; }
.menu .chev.up { transform: rotate(180deg); color: #fff; }
.menu .chev.first { align-self: flex-start; margin-top: 6px; }
.menu a.open { background: #073654; }
.menu a.open .mi { color: #fff; }
.menu a.sub { padding: 6px 0 7px 43px; font-weight: 400; position: relative; }
.menu a.sub::before { content: ""; position: absolute; left: 23px; top: 14px; width: 5px; height: 6px; border-radius: 3px; background: #fff; }
.menu a.tall { padding: 9px 17px 9px 14px; line-height: 20px; }
.menu a.tight { gap: 3px; padding-right: 0; }

.page { flex: 1; min-width: 0; display: flex; flex-direction: column; }
.topbar { display: flex; align-items: center; height: 79px; padding: 0 25px 0 calc(50% - 140px); background: #fff; box-shadow: 0 1px 3px #e4e5ec; }
.company { display: flex; gap: 6px; margin-right: auto; padding-bottom: 14px; }
.company h1 { margin: 9px 0 0; font-size: 16px; line-height: 24px; font-weight: 600; white-space: nowrap; color: #495057; }
.details { display: flex; align-items: center; gap: 6px; border: 0; padding: 0; background: none; font-size: 19px; color: #5d6378; white-space: nowrap; }
.bell { position: relative; margin: 0 28px; border: 0; padding: 0; background: none; }
.count { position: absolute; left: 8px; top: -20px; width: 26px; height: 26px; border-radius: 13px; background: #f44c4c; color: #fff; font-weight: 800; line-height: 26px; text-align: center; }
.profile { display: flex; align-items: center; gap: 10px; }
.avatar { display: flex; align-items: center; justify-content: center; width: 40px; height: 40px; border: 1px solid #e9e9ec; border-radius: 20px; }
.who { display: flex; flex-direction: column; white-space: nowrap; }
.who b { font-size: 16px; line-height: 20px; font-weight: 500; }
.who small { font-size: 12px; line-height: 20px; font-weight: 600; color: #7c8197; }

.content { flex: 1; padding: 3px 19px; }
.card { position: relative; background: #fff; border-radius: 3px; box-shadow: 0 1px 4px #e2e4ec; }
.card::before { content: ""; position: absolute; left: 0; top: 0; width: 2px; height: 29px; background: #1b84bd; }
.card h2 { margin: 0; padding: 13px 18px 14px; border-bottom: 1px solid #eef0f2; font-size: 13px; font-weight: 600; line-height: 19px; }
.body { padding: 19px 27px 20px; }
.filters { display: grid; grid-template-columns: repeat(4, 1fr); gap: 18px; }
.field { display: flex; flex-direction: column; gap: 8px; }
label { color: #212529; font-weight: 600; }
.field i { color: #f33; font-style: normal; }
.pick { appearance: none; height: 34px; padding: 0 7px 3px; border: 1px solid #aaa; border-radius: 5px; background: linear-gradient(#fff 20%, #f6f6f6 50%, #eee 52%, #f4f4f4); color: #444; box-shadow: 0 1px 1px #ddd; }
.date { height: 35px; border: 1px solid #dde1e5; border-radius: 4px; padding: 0 11px; background: #e1e5e8; color: #495057; }
.actions { display: flex; justify-content: center; gap: 5px; padding-top: 7px; }
.actions button { height: 35px; border: 0; border-radius: 3px; padding: 0 12px; background: #51d28c; color: #fff; }
.tabs { display: flex; border-bottom: 1px solid #eceef0; font-weight: 600; }
.tabs a { display: flex; align-items: center; gap: 3px; height: 33px; padding: 0 14px; }
.tabs a.on { border-bottom: 2px solid #0793e0; border-radius: 4px 4px 0 0; background: #f6f8fa; color: #0486d6; }
.controls { display: flex; justify-content: space-between; padding: 14px 0 13px; }
.controls label { display: flex; align-items: center; gap: 4px; height: 26px; }
.controls input { width: 144px; height: 26px; border: 1px solid #dfe3e7; border-radius: 3px; margin-left: 2px; }
.len { display: flex; align-items: center; width: 54px; height: 26px; padding: 0 12px 0 7px; border: 1px solid #dfe3e7; border-radius: 3px; color: #555; font-size: 11px; font-weight: 400; }
.len select { flex: 1; min-width: 0; appearance: none; border: 0; padding: 0; background: none; }

table { width: 100%; table-layout: fixed; border-collapse: collapse; text-align: center; }
.c-module { width: 130px; }
.c-activity { width: 136px; }
.c-loc { width: 233px; }
.c-date { width: 125px; }
.c-prev { width: 164px; }
.c-by { width: 152px; }
.c-status { width: 78px; }
.c-hist { width: 85px; }
th, td { position: relative; height: 42px; padding: 0; border-bottom: 1px solid #ebedf0; white-space: nowrap; }
th { padding-right: 16px; background: #f7f7f7; font-weight: 600; color: #343a40; }
.sort { position: absolute; right: 8px; bottom: 11px; width: 12px; height: 12px; }
td svg { margin: 0 auto; }
td a { position: relative; color: #00f; text-decoration: underline; }
.marked a { color: #000; }
td .marker { position: absolute; left: 50%; top: -10px; margin-left: -235px; }
.tablefoot { display: flex; justify-content: space-between; align-items: flex-start; padding-top: 2px; }
.tablefoot p { margin: 10px 0 0; }
.pager { display: flex; }
.pager button { height: 32px; border: 1px solid #dfe3e7; padding: 0 10px; background: #f8f9fb; color: #adb3b9; }
.pager .current { border-color: #038fde; border-radius: 3px; background: #038fde; color: #fff; font-weight: 600; padding: 0 11px; }
.foot { height: 54px; background: #ebebeb; color: #000; font-size: 11px; line-height: 54px; font-weight: 600; text-align: center; }

/* desktop task bar */
.taskbar { display: flex; align-items: center; justify-content: space-between; height: 60px; border-top: 1px solid #b0adac; padding: 0 24px; background: #dedcdb; color: #222; font-size: 15px; line-height: 20px; }
.weather { display: flex; align-items: center; gap: 6px; width: 382px; padding-bottom: 2px; }
.wicon { position: relative; }
.wcount, .tcount { position: absolute; border-radius: 10px; width: 20px; height: 20px; color: #fff; text-align: center; line-height: 20px; }
.wcount { left: 14px; top: -2px; background: #c42b1c; }
.tcount { left: 27px; top: 4px; background: #0078d4; }
.wtext { display: flex; flex-direction: column; }
.wtext small { font-size: 15px; color: #555; }
.dock { display: flex; align-items: center; flex: 1; }
.app-icon { position: relative; width: 55px; height: 58px; }
.app-icon.start { width: 32px; margin-right: 17px; }
.run::after { content: ""; position: absolute; left: 24px; bottom: 4px; width: 8px; height: 4px; border-radius: 2px; background: #858382; }
.focus::before { content: ""; position: absolute; z-index: -1; left: 4px; top: 4px; width: 47px; height: 49px; border: 1px solid #e8e6e5; border-right: 5px double #e3e1e0; border-radius: 5px; background: #f2f1f0; }
.focus { z-index: 0; }
.focus::after { left: 18px; width: 20px; background: #0078d4; }
.winsearch { display: flex; align-items: center; width: 273px; height: 40px; margin-right: 3px; padding: 0 8px 0 13px; gap: 11px; border: 1px solid #cfcccb; border-radius: 20px; background: #f5f4f4; font-weight: 400; }
.winsearch input { flex: 1; min-width: 0; border: 0; outline: 0; padding: 0; background: none; font-size: 16px; }
.winsearch input::placeholder { color: #5c5c5c; }
.menusearch { font-weight: 400; }
.tray { display: flex; align-items: center; gap: 10px; padding-bottom: 2px; }
.sync { margin: 0 12px; }
.lang { text-align: center; margin-right: 11px; }
.clock { margin-left: 10px; text-align: right; }
```
